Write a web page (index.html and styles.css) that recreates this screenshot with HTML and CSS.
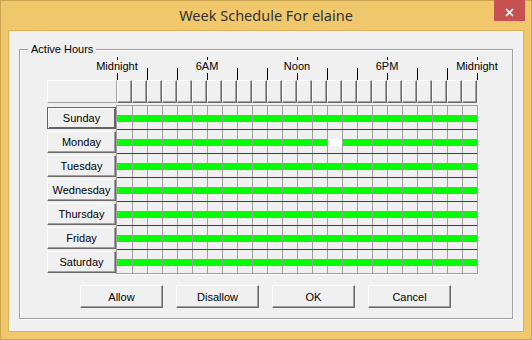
FILE: index.html
```html
<!DOCTYPE html>
<html lang="en">
<head>
    <meta charset="UTF-8">
    <title>Week Schedule For elaine</title>
    <link rel="stylesheet" href="styles.css">
</head>
<body>
    <div class="window">
        <div class="titlebar">
            <span class="title">Week Schedule For elaine</span>
            <div class="close">
                <svg width="9" height="9" viewBox="0 0 9 9">
                    <path d="M1 1 L8 8 M8 1 L1 8" stroke="#fff" stroke-width="1.6" fill="none"/>
                </svg>
            </div>
        </div>

        <div class="client">
            <div class="frame">
                <span class="legend">Active Hours</span>

                <div class="scale">
                    <div class="tick major"><span>Midnight</span></div>
                    <div class="tick"></div>
                    <div class="tick"></div>
                    <div class="tick major"><span>6AM</span></div>
                    <div class="tick"></div>
                    <div class="tick"></div>
                    <div class="tick major"><span>Noon</span></div>
                    <div class="tick"></div>
                    <div class="tick"></div>
                    <div class="tick major"><span>6PM</span></div>
                    <div class="tick"></div>
                    <div class="tick"></div>
                    <div class="tick major end"><span>Midnight</span></div>
                </div>

                <div class="head">
                    <div class="corner"></div>
                    <div class="hours">
                        <i></i><i></i><i></i><i></i><i></i><i></i><i></i><i></i><i></i><i></i><i></i><i></i>
                        <i></i><i></i><i></i><i></i><i></i><i></i><i></i><i></i><i></i><i></i><i></i><i></i>
                    </div>
                </div>

                <div class="body">
                    <div class="days">
                        <button class="btn focused">Sunday</button>
                        <button class="btn">Monday</button>
                        <button class="btn">Tuesday</button>
                        <button class="btn">Wednesday</button>
                        <button class="btn">Thursday</button>
                        <button class="btn">Friday</button>
                        <button class="btn">Saturday</button>
                    </div>
                    <div class="grid">
                        <div class="row">
                            <i></i><i></i><i></i><i></i><i></i><i></i><i></i><i></i><i></i><i></i><i></i><i></i>
                            <i></i><i></i><i></i><i></i><i></i><i></i><i></i><i></i><i></i><i></i><i></i><i></i>
                        </div>
                        <div class="row">
                            <i></i><i></i><i></i><i></i><i></i><i></i><i></i><i></i><i></i><i></i><i></i><i></i>
                            <i></i><i></i><i class="off"></i><i></i><i></i><i></i><i></i><i></i><i></i><i></i><i></i><i></i>
                        </div>
                        <div class="row">
                            <i></i><i></i><i></i><i></i><i></i><i></i><i></i><i></i><i></i><i></i><i></i><i></i>
                            <i></i><i></i><i></i><i></i><i></i><i></i><i></i><i></i><i></i><i></i><i></i><i></i>
                        </div>
                        <div class="row">
                            <i></i><i></i><i></i><i></i><i></i><i></i><i></i><i></i><i></i><i></i><i></i><i></i>
                            <i></i><i></i><i></i><i></i><i></i><i></i><i></i><i></i><i></i><i></i><i></i><i></i>
                        </div>
                        <div class="row">
                            <i></i><i></i><i></i><i></i><i></i><i></i><i></i><i></i><i></i><i></i><i></i><i></i>
                            <i></i><i></i><i></i><i></i><i></i><i></i><i></i><i></i><i></i><i></i><i></i><i></i>
                        </div>
                        <div class="row">
                            <i></i><i></i><i></i><i></i><i></i><i></i><i></i><i></i><i></i><i></i><i></i><i></i>
                            <i></i><i></i><i></i><i></i><i></i><i></i><i></i><i></i><i></i><i></i><i></i><i></i>
                        </div>
                        <div class="row">
                            <i></i><i></i><i></i><i></i><i></i><i></i><i></i><i></i><i></i><i></i><i></i><i></i>
                            <i></i><i></i><i></i><i></i><i></i><i></i><i></i><i></i><i></i><i></i><i></i><i></i>
                        </div>
                    </div>
                </div>

                <div class="actions">
                    <button class="btn wide">Allow</button>
                    <button class="btn wide">Disallow</button>
                    <button class="btn wide">OK</button>
                    <button class="btn wide">Cancel</button>
                </div>
            </div>
        </div>
    </div>
</body>
</html>
```

FILE: styles.css
```css
:root {
    --frame-color: #f0c86b;
    --face: #f0f0f0;
    --shadow: #a0a0a0;
    --dark-shadow: #696969;
    --on-color: #00ff00;
}

* {
    box-sizing: border-box;
    margin: 0;
    padding: 0;
}

body {
    width: 532px;
    height: 340px;
    background: var(--frame-color);
    font-family: "Liberation Sans", Arial, sans-serif;
    font-size: 11px;
    color: #000;
    overflow: hidden;
}

.window {
    width: 532px;
    height: 340px;
    border: 1px solid #c9a350;
    padding: 0 7px 7px;
    display: flex;
    flex-direction: column;
}

.titlebar {
    height: 29px;
    flex-shrink: 0;
    position: relative;
    display: flex;
    justify-content: center;
    align-items: center;
    padding-bottom: 1px;
    font-family: "Noto Sans", "Open Sans", sans-serif;
    font-size: 14.5px;
    color: #333;
}

.close {
    position: absolute;
    top: -1px;
    right: -1px;
    width: 31px;
    height: 21px;
    background: #c75050;
    display: flex;
    justify-content: center;
    align-items: center;
    padding-top: 3px;
}

.client {
    flex: 1;
    background: var(--face);
    border: 1px solid #dab25c;
    padding: 18px 10px 0;
}

.frame {
    position: relative;
    height: 270px;
    border: 1px solid var(--shadow);
    box-shadow: 1px 1px 0 #fff, inset 1px 1px 0 #fff;
    padding: 7px 0 0 27px;
}

.legend {
    position: absolute;
    top: -7px;
    left: 8px;
    padding: 0 3px;
    line-height: 13px;
    background: var(--face);
}

/* hour scale above the grid */
.scale {
    display: flex;
    align-items: flex-end;
    height: 23px;
    margin-left: 70px;
}

.tick {
    position: relative;
    flex-shrink: 0;
    width: 30px;
    height: 12px;
    border-left: 1px solid #000;
}

.tick.major {
    height: 23px;
}

.tick.end {
    width: 0;
}

.tick span {
    position: absolute;
    top: 3px;
    left: -1px;
    transform: translateX(-50%);
    padding: 0 1px;
    line-height: 13px;
    white-space: nowrap;
    background: var(--face);
}

/* header row */
.head {
    display: flex;
    height: 23px;
}

.corner {
    width: 70px;
    border-top: 1px solid #fff;
    border-left: 1px solid #fff;
    border-right: 1px solid var(--shadow);
    border-bottom: 1px solid var(--shadow);
}

.hours {
    display: flex;
}

.hours i {
    width: 15px;
    height: 23px;
    border-top: 1px solid #fff;
    border-left: 1px solid #fff;
    border-right: 1px solid var(--dark-shadow);
    border-bottom: 1px solid var(--dark-shadow);
    box-shadow: inset -1px -1px 0 var(--shadow);
}

/* days and grid */
.body {
    display: flex;
    margin-top: 2px;
}

.days {
    width: 69px;
    display: flex;
    flex-direction: column;
    gap: 2px;
    padding-top: 2px;
}

.btn {
    font-family: "Liberation Sans", Arial, sans-serif;
    font-size: 11px;
    color: #000;
    background: var(--face);
    border-top: 1px solid #fff;
    border-left: 1px solid #fff;
    border-right: 1px solid var(--dark-shadow);
    border-bottom: 1px solid var(--dark-shadow);
    box-shadow: inset -1px -1px 0 var(--shadow);
    height: 22px;
    padding: 0;
    text-align: center;
}

.btn.focused {
    border: 1px solid #646464;
    box-shadow: inset 1px 1px 0 #fff, inset -1px -1px 0 #646464;
}

.grid {
    width: 362px;
    border: 1px solid var(--shadow);
    box-shadow: 1px 1px 0 #fff;
}

.row {
    display: flex;
    height: 24px;
    border-top: 1px solid #404040;
}

.row:first-child {
    height: 23px;
    border-top: 0;
}

.row i {
    width: 15px;
    height: 23px;
    border-left: 1px solid var(--shadow);
}

.row i:first-child {
    border-left: 0;
}

.row i::before {
    content: "";
    display: block;
    height: 7px;
    margin-top: 9px;
    background: var(--on-color);
}

.row i.off::before {
    background: #fff;
}

.actions {
    display: flex;
    gap: 13px;
    margin: 11px 0 0 33px;
}

.btn.wide {
    width: 83px;
    height: 23px;
}
```
